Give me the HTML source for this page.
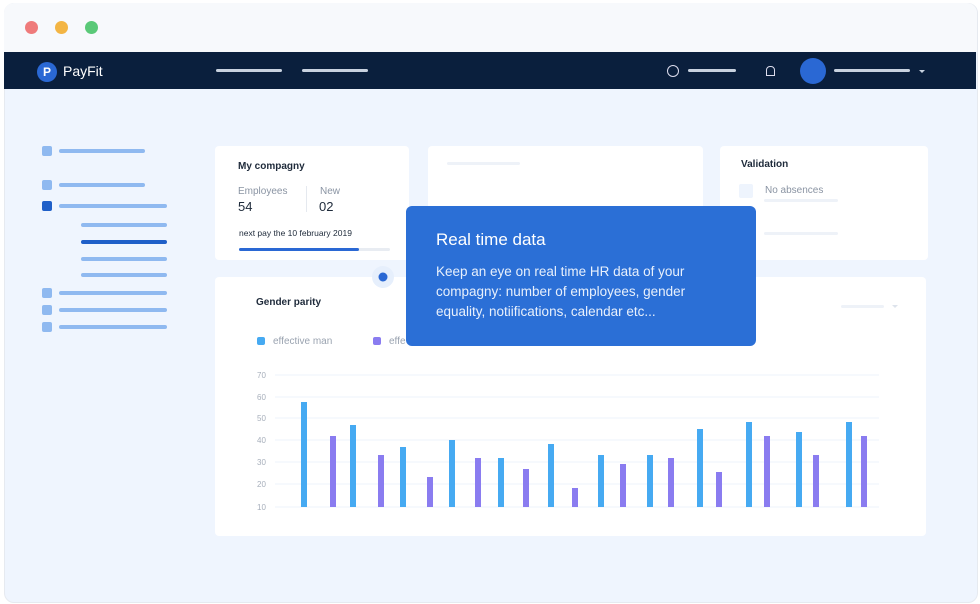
<!DOCTYPE html><html><head><style>
body{margin:0;width:980px;height:604px;background:#fff;font-family:"Liberation Sans",sans-serif;position:relative;overflow:hidden}
.a{position:absolute}
.l{position:absolute;height:4px;border-radius:2px;background:#8fb9f0}
.card{position:absolute;background:#fff;border-radius:4px}
</style></head><body>
<div class="a" style="left:4px;top:3px;width:972px;height:598px;background:#eff5fe;border-radius:10px;border:1px solid #e6eaf0"></div>
<div class="a" style="left:4px;top:3px;width:973px;height:49px;background:#f7f9fc;border-radius:10px 10px 0 0"></div>
<div class="a" style="left:25px;top:21px;width:13px;height:13px;border-radius:50%;background:#ef7b7b"></div>
<div class="a" style="left:55px;top:21px;width:13px;height:13px;border-radius:50%;background:#f3b544"></div>
<div class="a" style="left:85px;top:21px;width:13px;height:13px;border-radius:50%;background:#5ac978"></div>
<div class="a" style="left:4px;top:52px;width:972px;height:37px;background:#0a1f3d"></div>
<div class="a" style="left:37px;top:62px;width:20px;height:20px;border-radius:50%;background:#2a68d4;color:#fff;font-size:12px;line-height:20px;text-align:center;font-weight:bold">P</div>
<div class="a" style="left:63px;top:63px;color:#fff;font-size:14px">PayFit</div>
<div class="l" style="left:216px;top:69px;width:66px;height:3px;background:#c8d2e0"></div>
<div class="l" style="left:302px;top:69px;width:66px;height:3px;background:#c8d2e0"></div>
<div class="a" style="left:667px;top:65px;width:10px;height:10px;border:1.5px solid #dde;border-radius:50%"></div>
<div class="l" style="left:688px;top:69px;width:48px;height:3px;background:#c8d2e0"></div>
<div class="a" style="left:766px;top:66px;width:7px;height:8px;border:1.5px solid #dde;border-radius:4px 4px 0 0"></div>
<div class="a" style="left:800px;top:58px;width:26px;height:26px;border-radius:50%;background:#2a68d4"></div>
<div class="l" style="left:834px;top:69px;width:76px;height:3px;background:#c8d2e0"></div>
<div class="a" style="left:919px;top:70px;border:3px solid transparent;border-top:3px solid #c8d2e0"></div>
<!-- sidebar -->
<div class="a" style="left:42px;top:146px;width:10px;height:10px;border-radius:2px;background:#8fb9f0"></div><div class="l" style="left:59px;top:149px;width:86px"></div>
<div class="a" style="left:42px;top:180px;width:10px;height:10px;border-radius:2px;background:#8fb9f0"></div><div class="l" style="left:59px;top:183px;width:86px"></div>
<div class="a" style="left:42px;top:201px;width:10px;height:10px;border-radius:2px;background:#1f5fc8"></div><div class="l" style="left:59px;top:204px;width:108px"></div>
<div class="l" style="left:81px;top:223px;width:86px"></div>
<div class="l" style="left:81px;top:240px;width:86px;background:#1f5fc8"></div>
<div class="l" style="left:81px;top:257px;width:86px"></div>
<div class="l" style="left:81px;top:273px;width:86px"></div>
<div class="a" style="left:42px;top:288px;width:10px;height:10px;border-radius:2px;background:#8fb9f0"></div><div class="l" style="left:59px;top:291px;width:108px"></div>
<div class="a" style="left:42px;top:305px;width:10px;height:10px;border-radius:2px;background:#8fb9f0"></div><div class="l" style="left:59px;top:308px;width:108px"></div>
<div class="a" style="left:42px;top:322px;width:10px;height:10px;border-radius:2px;background:#8fb9f0"></div><div class="l" style="left:59px;top:325px;width:108px"></div>
<!-- cards -->
<div class="card" style="left:215px;top:146px;width:194px;height:114px"></div>
<div class="a" style="left:238px;top:161px;font-size:10px;font-weight:bold;color:#1e2a3a">My compagny</div>
<div class="a" style="left:238px;top:186px;font-size:10px;color:#8a94a3">Employees</div>
<div class="a" style="left:238px;top:199px;font-size:13px;color:#1e2a3a">54</div>
<div class="a" style="left:306px;top:186px;width:1px;height:26px;background:#e5e9ef"></div>
<div class="a" style="left:320px;top:186px;font-size:10px;color:#8a94a3">New</div>
<div class="a" style="left:319px;top:199px;font-size:13px;color:#1e2a3a">02</div>
<div class="a" style="left:239px;top:228px;font-size:8.5px;color:#1e2a3a">next pay the 10 february 2019</div>
<div class="l" style="left:239px;top:248px;width:151px;height:3px;background:#e8ecf2"></div>
<div class="l" style="left:239px;top:248px;width:120px;height:3px;background:#2a68d4"></div>
<div class="card" style="left:428px;top:146px;width:275px;height:114px"></div>
<div class="l" style="left:447px;top:162px;width:73px;height:3px;background:#eef2f8"></div>
<div class="card" style="left:720px;top:146px;width:208px;height:114px"></div>
<div class="a" style="left:741px;top:159px;font-size:10px;font-weight:bold;color:#1e2a3a">Validation</div>
<div class="a" style="left:739px;top:184px;width:14px;height:14px;background:#eef4fd;border-radius:2px"></div>
<div class="a" style="left:765px;top:185px;font-size:10px;color:#8a94a3">No absences</div>
<div class="l" style="left:764px;top:199px;width:74px;height:3px;background:#eef2f8"></div>
<div class="l" style="left:764px;top:232px;width:74px;height:3px;background:#eef2f8"></div>
<div class="card" style="left:215px;top:277px;width:711px;height:259px"></div>
<div class="a" style="left:256px;top:297px;font-size:10px;font-weight:bold;color:#1e2a3a">Gender parity</div>
<div class="l" style="left:841px;top:305px;width:43px;height:3px;background:#eef2f8"></div>
<div class="a" style="left:892px;top:305px;border:3px solid transparent;border-top:3px solid #dde3ec"></div>
<div class="a" style="left:257px;top:337px;width:8px;height:8px;border-radius:2px;background:#46aaf2"></div>
<div class="a" style="left:273px;top:336px;font-size:10px;color:#9aa3b0">effective man</div>
<div class="a" style="left:373px;top:337px;width:8px;height:8px;border-radius:2px;background:#8a7cf0"></div>
<div class="a" style="left:389px;top:336px;font-size:10px;color:#9aa3b0">effe</div>
<svg class="a" style="left:0;top:0" width="980" height="604">
<g stroke="#eef3fb" stroke-width="1"><line x1="275" x2="879" y1="375" y2="375"/><line x1="275" x2="879" y1="397" y2="397"/><line x1="275" x2="879" y1="418" y2="418"/><line x1="275" x2="879" y1="440" y2="440"/><line x1="275" x2="879" y1="462" y2="462"/><line x1="275" x2="879" y1="484" y2="484"/><line x1="275" x2="879" y1="507" y2="507"/></g>
<g font-family="Liberation Sans" font-size="8" fill="#a7afbb"><text x="257" y="378">70</text><text x="257" y="400">60</text><text x="257" y="421">50</text><text x="257" y="443">40</text><text x="257" y="465">30</text><text x="257" y="487">20</text><text x="257" y="510">10</text></g>
<g fill="#46aaf2">
<rect x="301" y="402" width="6" height="105"/><rect x="350" y="425" width="6" height="82"/><rect x="400" y="447" width="6" height="60"/><rect x="449" y="440" width="6" height="67"/><rect x="498" y="458" width="6" height="49"/><rect x="548" y="444" width="6" height="63"/><rect x="598" y="455" width="6" height="52"/><rect x="647" y="455" width="6" height="52"/><rect x="697" y="429" width="6" height="78"/><rect x="746" y="422" width="6" height="85"/><rect x="796" y="432" width="6" height="75"/><rect x="846" y="422" width="6" height="85"/></g>
<g fill="#8a7cf0">
<rect x="330" y="436" width="6" height="71"/><rect x="378" y="455" width="6" height="52"/><rect x="427" y="477" width="6" height="30"/><rect x="475" y="458" width="6" height="49"/><rect x="523" y="469" width="6" height="38"/><rect x="572" y="488" width="6" height="19"/><rect x="620" y="464" width="6" height="43"/><rect x="668" y="458" width="6" height="49"/><rect x="716" y="472" width="6" height="35"/><rect x="764" y="436" width="6" height="71"/><rect x="813" y="455" width="6" height="52"/><rect x="861" y="436" width="6" height="71"/></g>
<circle cx="383" cy="277" r="11" fill="#e6effc"/><circle cx="383" cy="277" r="4.5" fill="#2a68d4"/>
</svg>
<div class="a" style="left:406px;top:206px;width:350px;height:140px;background:#2b6fd6;border-radius:6px;color:#fff">
<div style="position:absolute;left:30px;top:24px;font-size:17px">Real time data</div>
<div style="position:absolute;left:30px;top:56px;width:285px;font-size:13.5px;line-height:20px;color:#e8f0fc">Keep an eye on real time HR data of your compagny: number of employees, gender equality, notiifications, calendar etc...</div>
</div>
</body></html>
